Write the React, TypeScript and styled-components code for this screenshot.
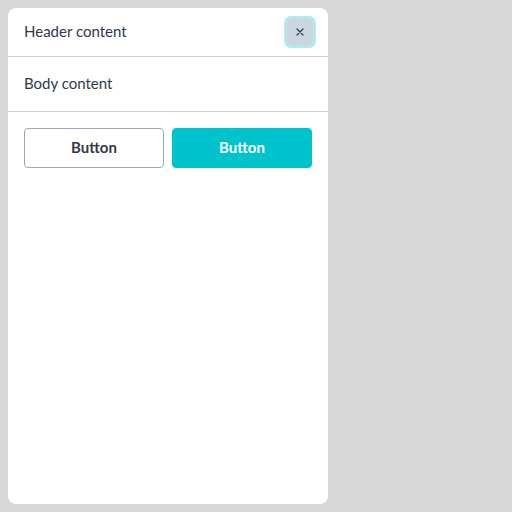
import React from "react";
import styled, { createGlobalStyle } from "styled-components";

const GlobalStyle = createGlobalStyle`
  html, body {
    margin: 0;
    padding: 0;
    background: #d9d9d9;
    font-family: Lato, "Noto Sans", sans-serif;
    color: #2e3a4b;
  }
`;

const Page = styled.div`
  padding: 8px;
  height: 512px;
  box-sizing: border-box;
`;

const Panel = styled.div`
  width: 320px;
  height: 496px;
  background: #ffffff;
  border-radius: 8px;
  display: flex;
  flex-direction: column;
  overflow: hidden;
`;

const Header = styled.div`
  display: flex;
  align-items: center;
  justify-content: space-between;
  height: 48px;
  padding: 0 12px 0 16px;
  border-bottom: 1px solid #c9d3dd;
`;

const Title = styled.span`
  font-size: 15px;
  line-height: 20px;
  padding-bottom: 2px;
`;

const CloseButton = styled.button`
  width: 32px;
  height: 32px;
  box-sizing: border-box;
  display: flex;
  align-items: center;
  justify-content: center;
  padding: 0;
  background: #cdd6df;
  border: 3px solid #b4eaee;
  border-radius: 7px;
  color: #2e3a4b;
  cursor: pointer;
`;

const Body = styled.div`
  padding: 15px 16px 17px;
  font-size: 15px;
  line-height: 22px;
  border-bottom: 1px solid #c9d3dd;
`;

const Footer = styled.div`
  display: grid;
  grid-template-columns: 1fr 1fr;
  gap: 8px;
  padding: 16px;
`;

const Button = styled.button<{ $primary?: boolean }>`
  height: 40px;
  box-sizing: border-box;
  padding: 0 0 2px;
  border-radius: 4px;
  font-family: Lato, "Noto Sans", sans-serif;
  font-size: 15px;
  font-weight: 700;
  cursor: pointer;
  background: ${({ $primary }) => ($primary ? "#00c3cc" : "#ffffff")};
  color: ${({ $primary }) => ($primary ? "#ffffff" : "#2e3a4b")};
  border: 1px solid ${({ $primary }) => ($primary ? "#00c3cc" : "#98aabb")};
`;

const App: React.FC = () => {
  return (
    <Page>
      <GlobalStyle />
      <Panel>
        <Header>
          <Title>Header content</Title>
          <CloseButton aria-label="Close">
            <svg width="8" height="8" viewBox="0 0 8 8">
              <path d="M1 1L7 7M7 1L1 7" stroke="currentColor" strokeWidth="1.2" strokeLinecap="round" />
            </svg>
          </CloseButton>
        </Header>
        <Body>Body content</Body>
        <Footer>
          <Button>Button</Button>
          <Button $primary>Button</Button>
        </Footer>
      </Panel>
    </Page>
  );
};

export default App;
